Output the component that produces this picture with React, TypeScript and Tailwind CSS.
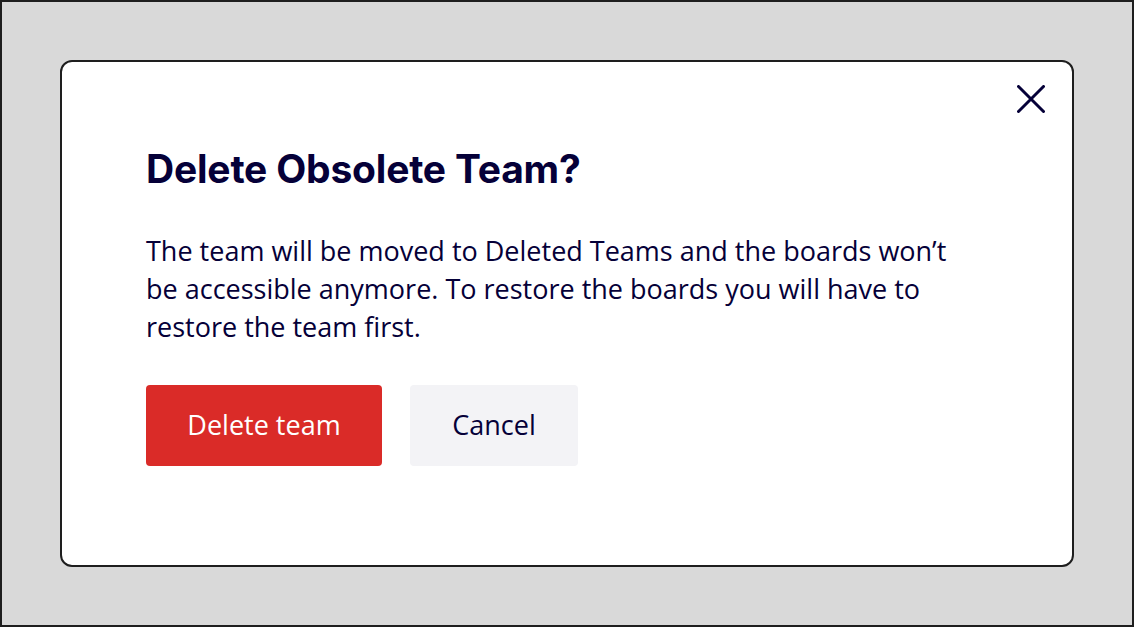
import React from "react";

export default function App() {
  return (
    <div className="w-[1134px] h-[627px] bg-[#d9d9d9] border-2 border-[#1e1e1e] pt-[58px] pl-[58px]">
      <div className="relative w-[1014px] h-[507px] bg-white border-2 border-[#1e1e1e] rounded-[12px] pl-[84px] pt-[83px]" style={{ fontFamily: "'Open Sans', sans-serif" }}>
        <button className="absolute right-[27px] top-[23px] w-[28px] h-[28px] flex items-center justify-center">
          <svg width="28" height="28" viewBox="0 0 28 28" fill="none">
            <path d="M1.5 1.5L26.5 26.5M26.5 1.5L1.5 26.5" stroke="#050038" strokeWidth="3" strokeLinecap="round" />
          </svg>
        </button>
        <h1 className="text-[39px] leading-[48px] font-bold text-[#050038] tracking-[-0.2px]" style={{ fontFamily: "Inter, sans-serif" }}>
          Delete Obsolete Team?
        </h1>
        <p className="mt-[39px] w-[815px] text-[27px] leading-[38px] text-[#050038]">
          The team will be moved to Deleted Teams and the boards won’t be accessible anymore. To restore the boards you will have to restore the team first.
        </p>
        <div className="mt-[39px] flex gap-[28px]">
          <button className="w-[236px] h-[81px] rounded-[4px] bg-[#da2b28] text-white text-[27px]">Delete team</button>
          <button className="w-[168px] h-[81px] rounded-[4px] bg-[#f3f3f6] text-[#050038] text-[27px]">Cancel</button>
        </div>
      </div>
    </div>
  );
}
